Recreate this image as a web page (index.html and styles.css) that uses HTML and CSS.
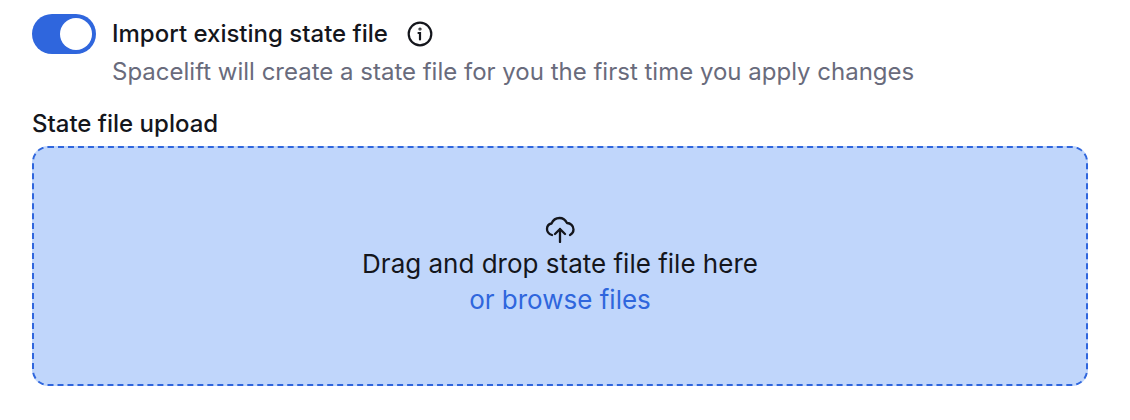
FILE: index.html
```html
<!DOCTYPE html>
<html lang="en">
<head>
<meta charset="utf-8">
<title>State file upload</title>
<link rel="stylesheet" href="styles.css">
</head>
<body>
<main class="page">
  <div class="toggle-row">
    <span class="toggle"><span class="knob"></span></span>
    <div class="toggle-text">
      <div class="title-row">
        <span class="title">Import existing state file</span>
        <svg class="info" width="26" height="26" viewBox="0 0 26 26" fill="none" stroke="#14161c" stroke-width="2.200" stroke-linecap="round"><circle cx="13" cy="13" r="11.300"/><path d="M11.500 12H13V18.500"/><circle cx="13" cy="8" r="0.500"/></svg>
      </div>
      <div class="desc">Spacelift will create a state file for you the first time you apply changes</div>
    </div>
  </div>
  <div class="label">State file upload</div>
  <div class="drop">
    <svg class="cloud" width="30" height="28" viewBox="0 0 30 28" fill="none" stroke="#14161c" stroke-width="2.300" stroke-linecap="round" stroke-linejoin="round"><path d="M7 20C3.500 19 2 16.500 2 14C2 11 4 9 6.500 8.500C8 5 11 3 14.500 3C18 3 20.500 5 22 8C25.500 8 28.500 11 28.500 14.500C28.500 17 27 19 25 20"/><path d="M15 27V14M10 19l5-5 5 5"/></svg>
    <div class="drop-text">Drag and drop state file file here</div>
    <div class="browse">or browse files</div>
  </div>
</main>
</body>
</html>
```
FILE: styles.css
```css
* { box-sizing: border-box; }
html, body { margin: 0; background: #fff; }
body { font-family: Inter, "Liberation Sans", sans-serif; color: #14161c; }
.page { width: 1130px; height: 420px; padding: 14px 42px 0 32px; overflow: hidden; }
.toggle-row { display: flex; gap: 16px; align-items: flex-start; }
.toggle { width: 64px; height: 40px; border-radius: 20px; background: #2f66dd; display: flex; align-items: center; justify-content: flex-end; padding-right: 4px; flex: none; }
.knob { width: 32px; height: 32px; border-radius: 50%; background: #fff; }
.toggle-text { display: flex; flex-direction: column; }
.title-row { display: flex; align-items: center; gap: 19px; height: 40px; }
.title { font-size: 24px; font-weight: 500; line-height: 40px; }
.info { flex: none; }
.desc { font-size: 24px; line-height: 36px; color: #696b7c; }
.label { font-size: 24px; font-weight: 500; line-height: 36px; margin-top: 16px; }
.drop { margin-top: 4px; height: 240px; border: 2px dashed #2f66dd; border-radius: 16px; background: #c0d6fb; display: flex; flex-direction: column; align-items: center; padding-top: 67px; text-align: center; }
.cloud { flex: none; margin-bottom: 3px; }
.drop-text { font-size: 26px; line-height: 36px; }
.browse { font-size: 26px; line-height: 36px; font-weight: 400; color: #2f66dd; }
```
